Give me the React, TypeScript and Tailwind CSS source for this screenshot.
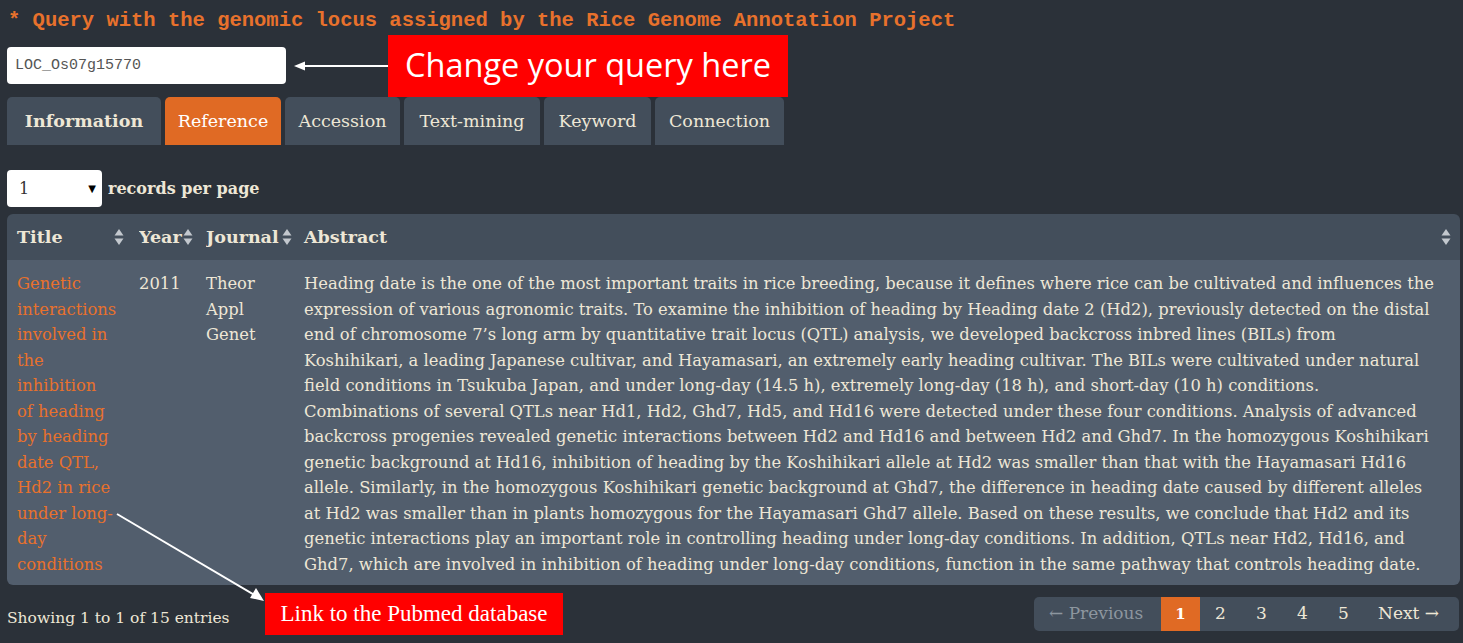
import { useState } from "react";

const serif = "font-['DejaVu_Serif',_Georgia,_serif]";

const titleLines = [
    "Genetic",
    "interactions",
    "involved in",
    "the",
    "inhibition",
    "of heading",
    "by heading",
    "date QTL,",
    "Hd2 in rice",
    "under long-",
    "day",
    "conditions",
];

const abstractLines = [
    "Heading date is the one of the most important traits in rice breeding, because it defines where rice can be cultivated and influences the",
    "expression of various agronomic traits. To examine the inhibition of heading by Heading date 2 (Hd2), previously detected on the distal",
    "end of chromosome 7\u2019s long arm by quantitative trait locus (QTL) analysis, we developed backcross inbred lines (BILs) from",
    "Koshihikari, a leading Japanese cultivar, and Hayamasari, an extremely early heading cultivar. The BILs were cultivated under natural",
    "field conditions in Tsukuba Japan, and under long-day (14.5 h), extremely long-day (18 h), and short-day (10 h) conditions.",
    "Combinations of several QTLs near Hd1, Hd2, Ghd7, Hd5, and Hd16 were detected under these four conditions. Analysis of advanced",
    "backcross progenies revealed genetic interactions between Hd2 and Hd16 and between Hd2 and Ghd7. In the homozygous Koshihikari",
    "genetic background at Hd16, inhibition of heading by the Koshihikari allele at Hd2 was smaller than that with the Hayamasari Hd16",
    "allele. Similarly, in the homozygous Koshihikari genetic background at Ghd7, the difference in heading date caused by different alleles",
    "at Hd2 was smaller than in plants homozygous for the Hayamasari Ghd7 allele. Based on these results, we conclude that Hd2 and its",
    "genetic interactions play an important role in controlling heading under long-day conditions. In addition, QTLs near Hd2, Hd16, and",
    "Ghd7, which are involved in inhibition of heading under long-day conditions, function in the same pathway that controls heading date.",
];

const tabs = [
    { name: "Information", w: "w-[154px]" },
    { name: "Reference", w: "w-[116px]" },
    { name: "Accession", w: "w-[115px]" },
    { name: "Text-mining", w: "w-[136px]" },
    { name: "Keyword", w: "w-[107px]" },
    { name: "Connection", w: "w-[129px]" },
];

const SortIcon = () => (
    <svg width="10" height="18" viewBox="0 0 10 18" className="shrink-0">
        <path d="M5 1 L9.5 7.5 L0.5 7.5 Z" fill="#c3c8ce" />
        <path d="M5 17 L9.5 10.5 L0.5 10.5 Z" fill="#c3c8ce" />
    </svg>
);

const App = () => {
    const [query, setQuery] = useState("LOC_Os07g15770");
    const [tab, setTab] = useState("Reference");

    return (
        <div className={`relative min-h-screen w-full bg-[#2b3139] text-[#eee7d6] ${serif}`}>
            {/* Heading */}
            <h1 className="pl-2 pt-[9px] h-[34px] text-[20.5px] leading-[24px] font-bold text-[#e8712c] font-['Liberation_Mono',_'Courier_New',_monospace] whitespace-nowrap">
                * Query with the genomic locus assigned by the Rice Genome Annotation Project
            </h1>

            {/* Query input + note */}
            <div className="flex items-center h-[63px] pl-[7px]">
                <input
                    value={query}
                    onChange={(e) => setQuery(e.target.value)}
                    className="w-[279px] h-[37px] bg-white rounded-[4px] px-2 text-[15px] text-[#555] font-['Liberation_Mono',_monospace] outline-none"
                />
                <svg width="94" height="12" viewBox="0 0 94 12" className="ml-[8px]">
                    <line x1="8" y1="6" x2="94" y2="6" stroke="white" strokeWidth="2" />
                    <path d="M0 6 L11 1.5 L11 10.5 Z" fill="white" />
                </svg>
                <div className="w-[400px] h-[62px] bg-[#ff0000] flex items-center justify-center text-white text-[32.5px] font-['Open_Sans',_sans-serif]">
                    Change your query here
                </div>
            </div>

            {/* Tabs */}
            <div className="flex pl-[7px] gap-[4px] h-[48px]">
                {tabs.map((t) => (
                    <button
                        key={t.name}
                        onClick={() => setTab(t.name)}
                        className={`${t.w} h-full rounded-t-[5px] text-[17.5px] ${
                            t.name === "Information" ? "font-bold" : ""
                        } ${
                            t.name === tab
                                ? "bg-[#e06a24] text-white"
                                : "bg-[#434e5b] text-[#eee7d6]"
                        }`}
                    >
                        {t.name}
                    </button>
                ))}
            </div>

            {/* Page length */}
            <div className="flex items-center pl-[7px] mt-[25px] h-[37px] gap-[6px]">
                <div className="w-[95px] h-[37px] bg-white rounded-[4px] flex items-center justify-between pl-[12px] pr-[6px] text-[16px] text-[#333]">
                    <span>1</span>
                    <span className="text-[10px] text-black">▼</span>
                </div>
                <span className="text-[16px] font-bold text-[#eee7d6]">records per page</span>
            </div>

            {/* Table */}
            <div className="mx-[7px] mt-[7px] w-[1453px]">
                <div className="flex h-[46px] items-center bg-[#434e5b] rounded-t-[6px] text-[17.5px] font-bold">
                    <div className="w-[121px] pl-[10px] pr-[4px] flex items-center justify-between">
                        <span>Title</span>
                        <SortIcon />
                    </div>
                    <div className="w-[68px] pl-[11px] flex items-center overflow-hidden">
                        <span className="w-[44px] overflow-hidden whitespace-nowrap">Year</span>
                        <SortIcon />
                    </div>
                    <div className="w-[98px] pl-[10px] flex items-center overflow-hidden">
                        <span className="w-[76px] overflow-hidden whitespace-nowrap">Journal</span>
                        <SortIcon />
                    </div>
                    <div className="flex-1 pl-[10px] pr-[9px] flex items-center justify-between">
                        <span>Abstract</span>
                        <SortIcon />
                    </div>
                </div>
                <div className="flex h-[325px] bg-[#525e6d] rounded-b-[6px] pt-[11px] text-[16.35px] leading-[25.5px]">
                    <div className="w-[121px] pl-[10px] text-[#e8712c]">
                        {titleLines.map((l) => (
                            <div key={l} className="whitespace-nowrap">{l}</div>
                        ))}
                    </div>
                    <div className="w-[68px] pl-[11px]">2011</div>
                    <div className="w-[98px] pl-[10px]">
                        <div>Theor</div>
                        <div>Appl</div>
                        <div>Genet</div>
                    </div>
                    <div className="flex-1 pl-[10px]">
                        {abstractLines.map((l, i) => (
                            <div key={i} className="whitespace-nowrap">{l}</div>
                        ))}
                    </div>
                </div>
            </div>

            {/* Footer */}
            <div className="flex items-center pl-[7px] pr-[4px] mt-[8px] h-[42px]">
                <span className="w-[258px] text-[15.5px] pt-[10px] whitespace-nowrap">Showing 1 to 1 of 15 entries</span>
                <div className="w-[298px] h-[42px] bg-[#ff0000] flex items-center justify-center text-white text-[23px] font-['Liberation_Serif',_serif]">
                    Link to the Pubmed database
                </div>
                <div className="ml-auto w-[425px] h-[34px] bg-[#434e5b] rounded-[5px] flex items-center text-[17px]">
                    <span className="pl-[15px] w-[127px] text-[#8d969f] whitespace-nowrap">← Previous</span>
                    <span className="w-[39px] h-full bg-[#e06a24] flex items-center justify-center text-white font-bold text-[15px]">1</span>
                    <span className="w-[41px] text-center">2</span>
                    <span className="w-[41px] text-center">3</span>
                    <span className="w-[41px] text-center">4</span>
                    <span className="w-[41px] text-center">5</span>
                    <span className="pl-[14px] whitespace-nowrap">Next →</span>
                </div>
            </div>

            {/* Annotation arrow to title link */}
            <svg className="absolute left-0 top-0 pointer-events-none" width="300" height="643">
                <line x1="117" y1="514" x2="256" y2="596" stroke="white" strokeWidth="2" />
                <path d="M264 601 L250 598 L256 588 Z" fill="white" />
            </svg>
        </div>
    );
};

export default App;
